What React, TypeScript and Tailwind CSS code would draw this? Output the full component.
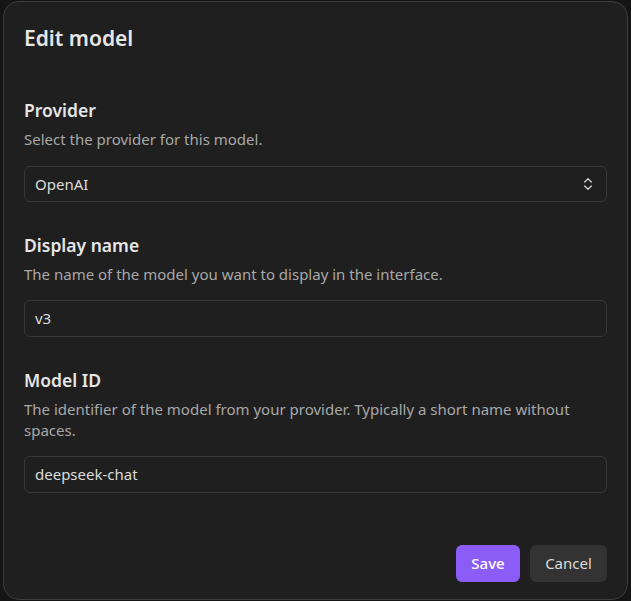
import { ChevronsUpDown } from 'lucide-react';

const fields = [
  {
    label: 'Display name',
    hint: 'The name of the model you want to display in the interface.',
    value: 'v3',
  },
  {
    label: 'Model ID',
    hint: 'The identifier of the model from your provider. Typically a short name without spaces.',
    value: 'deepseek-chat',
  },
];

export default function App() {
  return (
    <div className="h-[601px] w-[631px] overflow-hidden bg-[#151515] pl-[3px] pt-[1px] font-['Noto_Sans',sans-serif]">
      <div className="flex h-[599px] w-[625px] flex-col rounded-2xl border border-[#3d3d3d] bg-[#1f1f1f] px-5 pb-[17px] pt-[22px]">
        <h2 className="text-[21px] leading-7 font-semibold text-[#e6e6e6]">Edit model</h2>

        <section className="mt-[46px]">
          <Label text="Provider" />
          <Hint text="Select the provider for this model." />
          <button className="mt-4 flex h-9 w-full items-center justify-between rounded-md border border-[#383838] bg-[#1f1f1f] px-2.5 text-[15px] text-[#dcdcdc]">
            OpenAI
            <ChevronsUpDown className="h-4 w-4 text-[#cfcfcf]" strokeWidth={2} />
          </button>
        </section>

        {fields.map((f) => (
          <section key={f.label} className="mt-[31px]">
            <Label text={f.label} />
            <Hint text={f.hint} />
            <div className="mt-[15px] flex h-[37px] w-full items-center rounded-md border border-[#383838] px-2.5 text-[15px] text-[#dcdcdc]">
              {f.value}
            </div>
          </section>
        ))}

        <div className="mt-auto flex justify-end gap-2.5">
          <button className="h-[37px] w-16 rounded-md bg-[#8b5cf6] text-[15px] font-medium text-white">Save</button>
          <button className="h-[37px] w-[77px] rounded-md bg-[#333333] text-[15px] text-[#dcdcdc]">Cancel</button>
        </div>
      </div>
    </div>
  );
}

const Label = ({ text }: { text: string }) => (
  <h3 className="text-[17.5px] leading-6 font-semibold text-[#e6e6e6]">{text}</h3>
);

const Hint = ({ text }: { text: string }) => (
  <p className="mt-[7px] text-[15px] leading-[21px] text-[#a8a8a8]">{text}</p>
);
